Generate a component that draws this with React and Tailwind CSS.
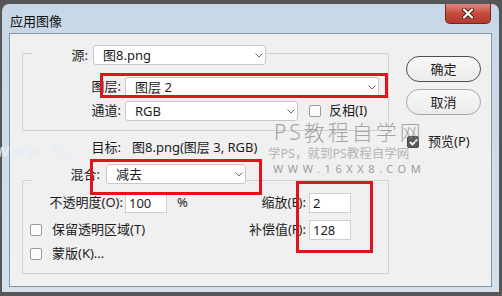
const Chevron = () => (
  <svg width="8" height="5" viewBox="0 0 8 5" className="shrink-0">
    <path d="M0.5 0.5 L4 4 L7.5 0.5" fill="none" stroke="#6a6a6a" strokeWidth="1" />
  </svg>
);

const Dropdown = ({ className, text }) => (
  <div
    className={
      "flex items-center justify-between h-[20px] bg-white border border-[#c8c8c8] rounded-[3px] pl-[9px] pr-[2px] leading-[18px] shrink-0 " +
      className
    }
  >
    <span>{text}</span>
    <Chevron />
  </div>
);

const Input = ({ className, value }) => (
  <div
    className={
      "h-[20px] bg-white border border-[#cfcfcf] pl-[3px] leading-[18px] shrink-0 " + className
    }
  >
    {value}
  </div>
);

const Checkbox = ({ className, checked }) =>
  checked ? (
    <div
      className={
        "w-[12px] h-[12px] rounded-[2px] bg-[#5b5b5b] border border-[#4a4a4a] flex items-center justify-center shrink-0 " +
        className
      }
    >
      <svg width="9" height="8" viewBox="0 0 9 8">
        <path d="M1 4 L3.5 6.5 L8 1.5" fill="none" stroke="#ffffff" strokeWidth="1.8" />
      </svg>
    </div>
  ) : (
    <div
      className={
        "w-[12px] h-[12px] rounded-[2px] bg-[#fbfbfb] border border-[#9a9a9a] shrink-0 " + className
      }
    />
  );

export default function App() {
  return (
    <div className="w-[502px] h-[296px] bg-[#565656] relative overflow-hidden font-['Noto_Sans','Noto_Sans_CJK_SC',sans-serif] text-[13px] text-[#1c1c1c]">
      {/* window */}
      <div className="ml-[2px] mt-[4px] w-[497px] h-[288px] rounded-t-[7px] bg-gradient-to-b from-[#c8d7e7] to-[#d4e0ec] flex flex-col px-[7px] pb-[5px]">
        {/* title bar */}
        <div className="h-[29px] flex items-start justify-between">
          <span className="mt-[9px] ml-[1px] leading-[16px] text-[13px] text-[#111]">应用图像</span>
          <div className="w-[46px] h-[20px] mr-[1px] rounded-b-[5px] border border-t-0 border-[#6a2a22] bg-gradient-to-b from-[#dc8a80] via-[#c44a3c] to-[#b33a2c] flex items-center justify-center">
            <svg width="12" height="11" viewBox="0 0 12 11">
              <path d="M2 1.5 L10 9.5 M10 1.5 L2 9.5" stroke="#4a1c16" strokeWidth="4" strokeLinecap="round" />
              <path d="M2 1.5 L10 9.5 M10 1.5 L2 9.5" stroke="#ffffff" strokeWidth="2.2" strokeLinecap="round" />
            </svg>
          </div>
        </div>

        {/* client */}
        <div className="flex-1 bg-[#f0f0f0] border border-[#8494a6] flex">
          {/* left column */}
          <div className="flex flex-col pl-[12px] pt-[11px] w-[379px] shrink-0">
            {/* group 1 header */}
            <div className="flex h-[20px]">
              <div className="w-[11px] mt-[8px] h-[12px] border-t border-l border-[#d2d2d2]" />
              <div className="w-[60px] text-right pr-[5px] leading-[20px]">源:</div>
              <Dropdown className="w-[173px]" text="图8.png" />
              <div className="flex-1 mt-[8px] h-[12px] border-t border-r border-[#d2d2d2]" />
            </div>
            {/* group 1 body */}
            <div className="border-l border-r border-b border-[#d2d2d2] h-[66px] pt-[12px] flex flex-col gap-[4px]">
              <div className="flex items-center h-[20px]">
                <div className="w-[98px] text-right">图层:</div>
                <Dropdown className="ml-[4px] w-[254px]" text="图层 2" />
              </div>
              <div className="flex items-center h-[20px]">
                <div className="w-[98px] text-right">通道:</div>
                <Dropdown className="ml-[4px] w-[173px]" text="RGB" />
                <Checkbox className="ml-[11px]" />
                <div className="ml-[8px]">反相(I)</div>
              </div>
            </div>

            {/* target */}
            <div className="flex mt-[8px] h-[16px] leading-[16px]">
              <div className="w-[99px] text-right">目标:</div>
              <div className="ml-[11px]">图8.png(图层 3, RGB)</div>
            </div>

            {/* group 2 header */}
            <div className="flex h-[20px] mt-[9px]">
              <div className="w-[11px] mt-[16px] h-[4px] border-t border-l border-[#d2d2d2]" />
              <div className="w-[73px] text-right pr-[6px] leading-[20px]">混合:</div>
              <Dropdown className="w-[140px]" text="减去" />
              <div className="flex-1 mt-[16px] h-[4px] border-t border-r border-[#d2d2d2]" />
            </div>
            {/* group 2 body */}
            <div className="border-l border-r border-b border-[#d2d2d2] h-[90px] pt-[9px] flex flex-col">
              <div className="flex items-center h-[20px]">
                <div className="w-[219px] flex items-center shrink-0">
                  <div className="w-[100px] text-right">不透明度(O):</div>
                  <Input className="ml-[2px] w-[42px]" value="100" />
                  <div className="ml-[10px]">%</div>
                </div>
                <div className="w-[64px] text-right">缩放(E):</div>
                <Input className="ml-[3px] w-[42px]" value="2" />
              </div>
              <div className="flex items-center h-[20px] mt-[7px]">
                <div className="w-[219px] flex items-center shrink-0">
                  <Checkbox className="ml-[7px]" />
                  <div className="ml-[10px]">保留透明区域(T)</div>
                </div>
                <div className="w-[64px] text-right">补偿值(F):</div>
                <Input className="ml-[3px] w-[42px]" value="128" />
              </div>
              <div className="flex items-center h-[20px] mt-[4px]">
                <Checkbox className="ml-[7px]" />
                <div className="ml-[10px]">蒙版(K)...</div>
              </div>
            </div>
          </div>

          {/* right column */}
          <div className="ml-[17px] flex flex-col pt-[22px] w-[75px] shrink-0">
            <div className="h-[26px] rounded-[13px] border border-[#4e4e4e] bg-gradient-to-b from-[#f7f7f7] to-[#ececec] flex items-center justify-center leading-[16px]">
              确定
            </div>
            <div className="h-[26px] mt-[7px] rounded-[13px] border border-[#a8a8a8] bg-gradient-to-b from-[#f7f7f7] to-[#ececec] flex items-center justify-center leading-[16px]">
              取消
            </div>
            <div className="flex items-center h-[20px] mt-[17px]">
              <Checkbox className="ml-[1px]" checked />
              <div className="ml-[9px]">预览(P)</div>
            </div>
          </div>
        </div>
      </div>

      {/* watermarks */}
      <div className="absolute left-[-5px] top-[141px] text-[17px] font-bold leading-[20px] text-[#e6eef8]/80 pointer-events-none tracking-[1px]">
        www. hu
      </div>
      <div className="absolute left-[274px] top-[118px] text-[21px] leading-[28px] font-light tracking-[3px] text-[#8e8e8e]/80 pointer-events-none whitespace-nowrap">
        PS教程自学网
      </div>
      <div className="absolute left-[268px] top-[146px] text-[12.5px] leading-[16px] text-[#b4b4b4] pointer-events-none whitespace-nowrap">
        学PS，就到PS教程自学网
      </div>
      <div className="absolute left-[273px] top-[162px] text-[11px] leading-[14px] tracking-[4.6px] text-[#9c9c9c] pointer-events-none whitespace-nowrap">
        WWW.16XX8.COM
      </div>

      {/* red annotations */}
      <div className="absolute left-[100px] top-[73px] w-[288px] h-[25px] border-[3px] border-[#e3121b] pointer-events-none" />
      <div className="absolute left-[90px] top-[159px] w-[172px] h-[36px] border-[3px] border-[#e3121b] pointer-events-none" />
      <div className="absolute left-[296px] top-[181px] w-[77px] h-[72px] border-[3px] border-[#e3121b] pointer-events-none" />
    </div>
  );
}
